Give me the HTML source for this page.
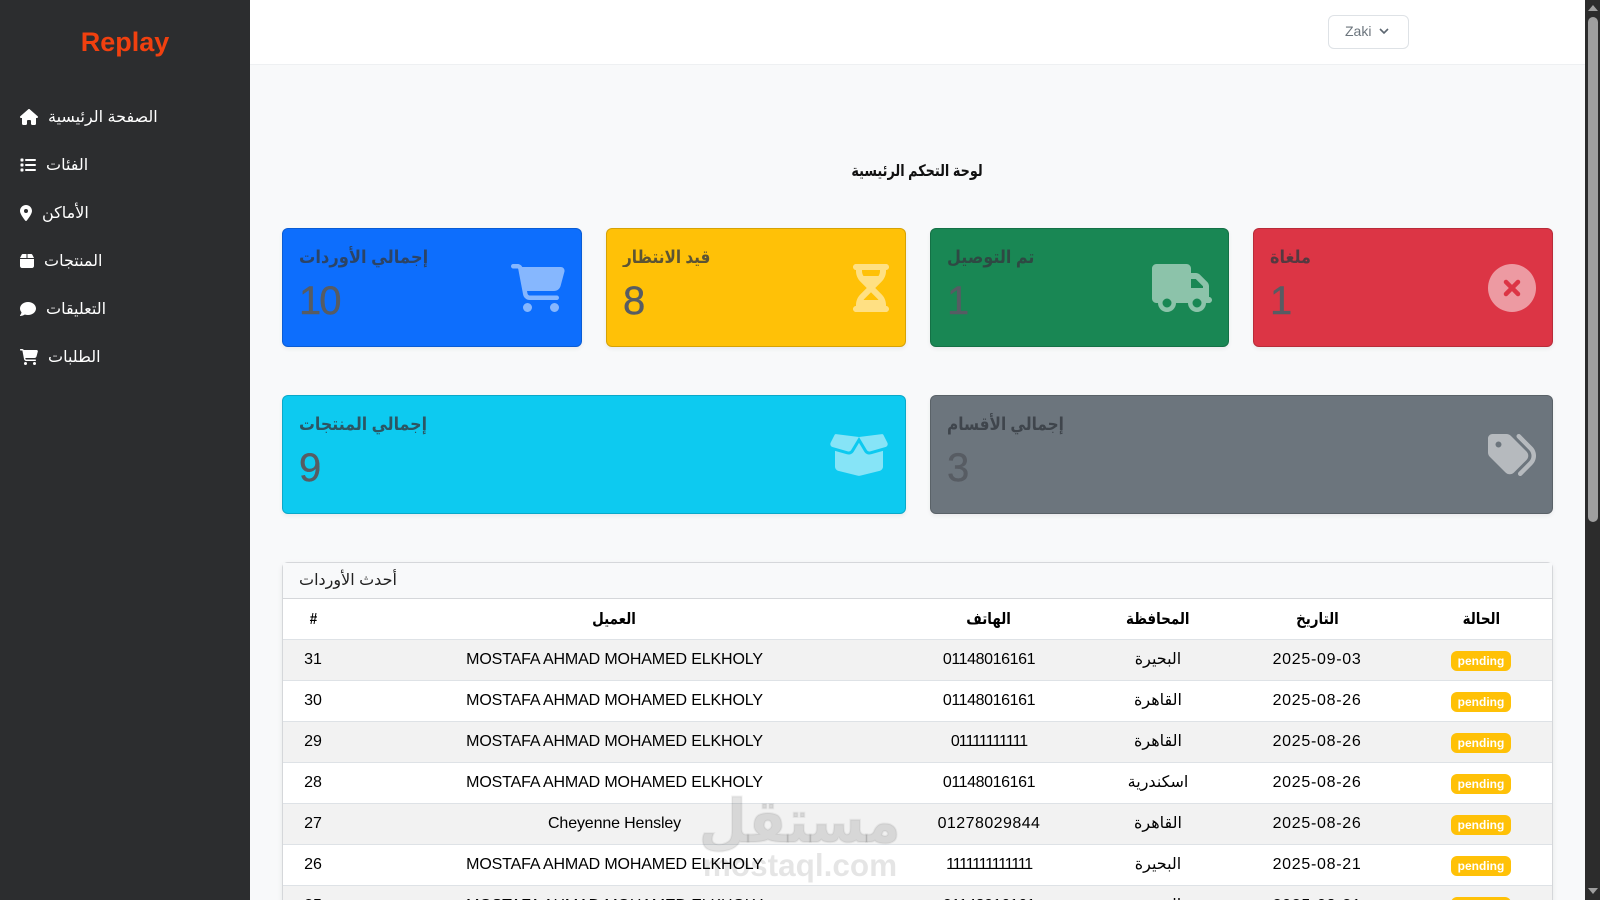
<!DOCTYPE html>
<html lang="ar">
<head>
<meta charset="utf-8">
<title>Replay</title>
<style>
*{box-sizing:border-box}
html,body{margin:0;padding:0;width:1600px;height:900px;overflow:hidden;background:#f8f9fa;font-family:"Liberation Sans","DejaVu Sans",sans-serif;color:#000}
#root{position:absolute;left:0;top:0;width:1600px;height:900px;overflow:hidden;background:#f8f9fa}
#side{position:absolute;left:0;top:0;width:250px;height:900px;background:#2c2d2f}
#logo{position:absolute;left:0;width:250px;top:24px;text-align:center;color:#f1400f;font-size:27px;font-weight:700;line-height:36px}
.nav{position:absolute;left:20px;height:24px;display:flex;align-items:center;color:#fff;font-size:16px}
.nav svg{fill:#fff;height:16px;flex:none}
.nav span{direction:rtl;margin-left:10px}
#top{position:absolute;left:250px;top:0;width:1335px;height:65px;background:#fff;border-bottom:1px solid #eef0f2}
#btn{position:absolute;left:1328px;top:15px;width:81px;height:34px;border:1px solid #dee2e6;border-radius:6px;background:#fff;color:#6c757d;font-size:14px;line-height:30px;padding-left:16px}
#btn svg{position:absolute;left:50px;top:11px}
#title{position:absolute;left:250px;width:1335px;top:160px;text-align:center;font-size:16px;font-weight:700;line-height:24px;color:#111}
#title span{display:inline-block;direction:rtl;transform:scaleX(.8)}
.card{position:absolute;height:119px;border:1px solid rgba(0,0,0,.16);border-radius:6px;box-shadow:0 2px 4px rgba(0,0,0,.06);overflow:hidden}
.card .t{position:absolute;left:16px;top:14px;font-size:18px;font-weight:700;line-height:28px;color:#343a40;opacity:.8;direction:rtl;transform-origin:left center;transform:scaleX(.89);white-space:nowrap}
.card .n{position:absolute;left:16px;top:48px;font-size:40px;line-height:48px;color:#575c63;-webkit-text-stroke:.4px #575c63}
.card svg{position:absolute;right:16px;top:35px;height:48px;fill:#fff;opacity:.5}
#panel{position:absolute;left:282px;top:562px;width:1271px;height:360px;background:#fff;border:1px solid #d5d7da;border-radius:6px 6px 0 0;box-shadow:0 2px 6px rgba(0,0,0,.07)}
#ph{height:36px;background:#f8f9fa;border-bottom:1px solid #d5d7da;font-size:16px;line-height:36px;padding-left:16px;color:#222}
#ph span{direction:rtl;display:inline-block}
table{border-collapse:collapse;table-layout:fixed;width:1269px;font-size:16px}
td,th{height:41px;padding:0;text-align:center;border-bottom:1px solid #dee2e6;vertical-align:middle;line-height:20px}
th{font-weight:700;height:40px}
th span{display:inline-block;direction:rtl;transform:scaleX(.84);position:relative;top:1px}
tbody tr:nth-child(odd){background:#f2f2f2}
tbody td:nth-child(2){letter-spacing:-.14px}
.ar{direction:rtl}
.d{letter-spacing:.7px}
.b{display:inline-block;width:60px;height:20px;border-radius:6px;background:#ffc107;color:#fff;font-size:12px;font-weight:700;line-height:20px;position:relative;top:1px}
#wm1{position:absolute;left:650px;width:300px;top:772px;text-align:center;font-size:60px;font-weight:700;line-height:100px;color:rgba(0,0,0,.11);-webkit-text-stroke:2px rgba(0,0,0,.05);z-index:5}
#wm1 span{display:inline-block;direction:rtl;transform:scaleX(.92)}
#wm2{position:absolute;left:650px;width:300px;top:845px;text-align:center;font-size:31.5px;font-weight:700;line-height:40px;color:rgba(0,0,0,.1);z-index:5}
#sb{position:absolute;left:1585px;top:0;width:15px;height:900px;background:#2c2c2c}
#sb i{position:absolute;left:3px;top:17px;width:10px;height:505px;background:#9f9f9f;border-radius:5px}
#sb b{position:absolute;left:3px;width:0;height:0;border-left:5px solid transparent;border-right:5px solid transparent}
</style>
</head>
<body>
<div id="root">
<div id="top"></div>
<div id="btn">Zaki<svg width="10" height="8" viewBox="0 0 10 8"><path d="M1 2l4 4 4-4" fill="none" stroke="#5c6670" stroke-width="1.6"/></svg></div>

<div id="side">
  <div id="logo">Replay</div>
  <div class="nav" style="top:105px"><svg viewBox="0 0 576 512"><path d="M575.8 255.5c0 18-15 32.1-32 32.1h-32l.7 160.2c0 2.7-.2 5.4-.5 8.1V472c0 22.1-17.9 40-40 40H456c-1.1 0-2.2 0-3.3-.1c-1.4 .1-2.8 .1-4.2 .1H416 392c-22.1 0-40-17.9-40-40V448 384c0-17.7-14.3-32-32-32H256c-17.7 0-32 14.3-32 32v64 24c0 22.1-17.9 40-40 40H160 128.1c-1.5 0-3-.1-4.5-.2c-1.2 .1-2.4 .2-3.6 .2H104c-22.1 0-40-17.9-40-40V360c0-.9 0-1.9 .1-2.8V287.6H32c-18 0-32-14-32-32.1c0-9 3-17 10-24L266.4 8c7-7 15-8 22-8s15 2 21 7L564.8 231.5c8 7 12 15 11 24z"/></svg><span>الصفحة الرئيسية</span></div>
  <div class="nav" style="top:153px"><svg viewBox="0 0 512 512"><path d="M40 48C26.7 48 16 58.7 16 72v48c0 13.3 10.7 24 24 24H88c13.3 0 24-10.7 24-24V72c0-13.3-10.7-24-24-24H40zM192 64c-17.7 0-32 14.3-32 32s14.3 32 32 32H480c17.7 0 32-14.3 32-32s-14.3-32-32-32H192zm0 160c-17.7 0-32 14.3-32 32s14.3 32 32 32H480c17.7 0 32-14.3 32-32s-14.3-32-32-32H192zm0 160c-17.7 0-32 14.3-32 32s14.3 32 32 32H480c17.7 0 32-14.3 32-32s-14.3-32-32-32H192zM16 232v48c0 13.3 10.7 24 24 24H88c13.3 0 24-10.7 24-24V232c0-13.3-10.7-24-24-24H40c-13.3 0-24 10.7-24 24zM40 368c-13.3 0-24 10.7-24 24v48c0 13.3 10.7 24 24 24H88c13.3 0 24-10.7 24-24V392c0-13.3-10.7-24-24-24H40z"/></svg><span>الفئات</span></div>
  <div class="nav" style="top:201px"><svg viewBox="0 0 384 512"><path d="M215.7 499.2C267 435 384 279.4 384 192C384 86 298 0 192 0S0 86 0 192c0 87.4 117 243 168.3 307.2c12.3 15.3 35.1 15.3 47.4 0zM192 256a64 64 0 1 1 0-128 64 64 0 1 1 0 128z"/></svg><span>الأماكن</span></div>
  <div class="nav" style="top:249px"><svg viewBox="0 0 448 512"><path d="M50.7 58.5L0 160H208V32H93.7C75.5 32 58.9 42.3 50.7 58.5zM240 160H448L397.3 58.5C389.1 42.3 372.5 32 354.3 32H240V160zm208 32H0V416c0 35.3 28.7 64 64 64H384c35.3 0 64-28.7 64-64V192z"/></svg><span>المنتجات</span></div>
  <div class="nav" style="top:297px"><svg viewBox="0 0 512 512"><path d="M512 240c0 114.9-114.6 208-256 208c-37.1 0-72.3-6.4-104.1-17.9c-11.9 8.7-31.3 20.6-54.3 30.6C73.6 471.1 44.7 480 16 480c-6.5 0-12.3-3.9-14.8-9.9c-2.5-6-1.1-12.8 3.4-17.4l0 0 0 0 0 0 0 0 .3-.3c.3-.3 .7-.7 1.3-1.4c1.1-1.2 2.8-3.1 4.9-5.7c4.1-5 9.6-12.4 15.2-21.6c10-16.6 19.5-38.4 21.4-62.9C17.7 326.8 0 285.1 0 240C0 125.1 114.6 32 256 32s256 93.1 256 208z"/></svg><span>التعليقات</span></div>
  <div class="nav" style="top:345px"><svg viewBox="0 0 576 512"><path d="M0 24C0 10.7 10.7 0 24 0H69.5c22 0 41.5 12.8 50.6 32h411c26.3 0 45.5 25 38.6 50.4l-41 152.3c-8.5 31.4-37 53.3-69.5 53.3H170.7l5.4 28.5c2.2 11.3 12.1 19.5 23.6 19.5H488c13.3 0 24 10.7 24 24s-10.7 24-24 24H199.7c-34.6 0-64.3-24.6-70.7-58.5L77.4 54.5c-.7-3.8-4-6.5-7.9-6.5H24C10.7 48 0 37.3 0 24zM128 464a48 48 0 1 1 96 0 48 48 0 1 1 -96 0zm336-48a48 48 0 1 1 0 96 48 48 0 1 1 0-96z"/></svg><span>الطلبات</span></div>
</div>

<div id="title"><span>لوحة التحكم الرئيسية</span></div>

<div class="card" style="left:282px;top:228px;width:300px;background:#0d6efd">
  <div class="t" style="transform:scaleX(.906)">إجمالي الأوردات</div><div class="n" style="letter-spacing:-2px">10</div>
  <svg viewBox="0 0 576 512"><path d="M0 24C0 10.7 10.7 0 24 0H69.5c22 0 41.5 12.8 50.6 32h411c26.3 0 45.5 25 38.6 50.4l-41 152.3c-8.5 31.4-37 53.3-69.5 53.3H170.7l5.4 28.5c2.2 11.3 12.1 19.5 23.6 19.5H488c13.3 0 24 10.7 24 24s-10.7 24-24 24H199.7c-34.6 0-64.3-24.6-70.7-58.5L77.4 54.5c-.7-3.8-4-6.5-7.9-6.5H24C10.7 48 0 37.3 0 24zM128 464a48 48 0 1 1 96 0 48 48 0 1 1 -96 0zm336-48a48 48 0 1 1 0 96 48 48 0 1 1 0-96z"/></svg>
</div>
<div class="card" style="left:606px;top:228px;width:300px;background:#ffc107">
  <div class="t" style="transform:scaleX(.85)">قيد الانتظار</div><div class="n">8</div>
  <svg viewBox="0 0 384 512"><path d="M32 0C14.3 0 0 14.3 0 32S14.3 64 32 64V75c0 42.4 16.9 83.1 46.9 113.1L146.7 256 78.9 323.9C48.9 353.9 32 394.6 32 437v11c-17.7 0-32 14.3-32 32s14.3 32 32 32H64 320h32c17.7 0 32-14.3 32-32s-14.3-32-32-32V437c0-42.4-16.9-83.1-46.9-113.1L237.3 256l67.9-67.9c30-30 46.9-70.7 46.9-113.1V64c17.7 0 32-14.3 32-32s-14.3-32-32-32H320 64 32zM96 75V64H288V75c0 19-5.6 37.4-16 53H112c-10.3-15.6-16-34-16-53zm16 309c3.5-5.3 7.6-10.3 12.1-14.9L192 301.3l67.9 67.9c4.6 4.6 8.6 9.6 12.1 14.9H112z"/></svg>
</div>
<div class="card" style="left:930px;top:228px;width:299px;background:#198754">
  <div class="t">تم التوصيل</div><div class="n">1</div>
  <svg viewBox="0 0 640 512"><path d="M48 0C21.5 0 0 21.5 0 48V368c0 26.5 21.5 48 48 48H64c0 53 43 96 96 96s96-43 96-96H384c0 53 43 96 96 96s96-43 96-96h32c17.7 0 32-14.3 32-32s-14.3-32-32-32V288 256 237.3c0-17-6.7-33.3-18.7-45.3L512 114.7c-12-12-28.3-18.7-45.3-18.7H416V48c0-26.5-21.5-48-48-48H48zM416 160h50.7L544 237.3V256H416V160zM112 416a48 48 0 1 1 96 0 48 48 0 1 1 -96 0zm368-48a48 48 0 1 1 0 96 48 48 0 1 1 0-96z"/></svg>
</div>
<div class="card" style="left:1253px;top:228px;width:300px;background:#dc3545">
  <div class="t">ملغاة</div><div class="n">1</div>
  <svg viewBox="0 0 512 512"><path d="M256 512A256 256 0 1 0 256 0a256 256 0 1 0 0 512zM175 175c9.4-9.4 24.6-9.4 33.9 0l47 47 47-47c9.4-9.4 24.6-9.4 33.9 0s9.4 24.6 0 33.9l-47 47 47 47c9.4 9.4 9.4 24.6 0 33.9s-24.6 9.4-33.9 0l-47-47-47 47c-9.4 9.4-24.6 9.4-33.9 0s-9.4-24.6 0-33.9l47-47-47-47c-9.4-9.4-9.4-24.6 0-33.9z"/></svg>
</div>
<div class="card" style="left:282px;top:395px;width:624px;background:#0dcaf0">
  <div class="t" style="transform:scaleX(.88)">إجمالي المنتجات</div><div class="n">9</div>
  <svg viewBox="0 0 640 512"><path d="M58.9 42.1c3-6.1 9.6-9.6 16.3-8.7L320 64 564.8 33.4c6.7-.8 13.3 2.7 16.3 8.7l41.7 83.4c9 17.9-.6 39.6-19.8 45.1L439.6 217.3c-13.9 4-28.8-1.9-36.2-14.3L320 64 236.6 203c-7.4 12.4-22.3 18.3-36.2 14.3L37.1 170.6c-19.3-5.5-28.8-27.2-19.8-45.1L58.9 42.1zM321.1 128l54.9 91.4c14.9 24.8 44.6 36.6 72.5 28.6L576 211.6v167c0 22-15 41.2-36.4 46.6l-204.1 51c-10.2 2.6-20.9 2.6-31 0l-204.1-51C79 419.7 64 400.5 64 378.5v-167L191.6 248c27.8 8 57.6-3.8 72.5-28.6L318.9 128h2.2z"/></svg>
</div>
<div class="card" style="left:930px;top:395px;width:623px;background:#6c757d">
  <div class="t" style="transform:scaleX(.85)">إجمالي الأقسام</div><div class="n">3</div>
  <svg viewBox="0 0 512 512"><path d="M345 39.1L472.8 168.4c52.4 53 52.4 138.2 0 191.2L360.8 472.9c-9.3 9.4-24.5 9.5-33.9 .2s-9.5-24.5-.2-33.9L438.6 325.9c33.9-34.3 33.9-89.4 0-123.7L310.9 72.9c-9.3-9.4-9.2-24.6 .2-33.9s24.6-9.2 33.9 .2zM0 229.5V80C0 53.5 21.5 32 48 32H197.5c17 0 33.3 6.7 45.3 18.7l168 168c25 25 25 65.5 0 90.5L277.3 442.7c-25 25-65.5 25-90.5 0l-168-168C6.7 262.7 0 246.5 0 229.5zM144 144a32 32 0 1 0 -64 0 32 32 0 1 0 64 0z"/></svg>
</div>

<div id="panel">
  <div id="ph"><span>أحدث الأوردات</span></div>
  <table>
    <colgroup><col style="width:60px"><col style="width:543px"><col style="width:206px"><col style="width:132px"><col style="width:186px"><col style="width:142px"></colgroup>
    <thead><tr><th><span>#</span></th><th><span>العميل</span></th><th><span>الهاتف</span></th><th><span>المحافظة</span></th><th><span>التاريخ</span></th><th><span>الحالة</span></th></tr></thead>
    <tbody>
      <tr><td>31</td><td>MOSTAFA AHMAD MOHAMED ELKHOLY</td><td style="letter-spacing:-.4px">01148016161</td><td class="ar">البحيرة</td><td class="d">2025-09-03</td><td><span class="b">pending</span></td></tr>
      <tr><td>30</td><td>MOSTAFA AHMAD MOHAMED ELKHOLY</td><td style="letter-spacing:-.4px">01148016161</td><td class="ar">القاهرة</td><td class="d">2025-08-26</td><td><span class="b">pending</span></td></tr>
      <tr><td>29</td><td>MOSTAFA AHMAD MOHAMED ELKHOLY</td><td style="letter-spacing:-1px">01111111111</td><td class="ar">القاهرة</td><td class="d">2025-08-26</td><td><span class="b">pending</span></td></tr>
      <tr><td>28</td><td>MOSTAFA AHMAD MOHAMED ELKHOLY</td><td style="letter-spacing:-.4px">01148016161</td><td class="ar">اسكندرية</td><td class="d">2025-08-26</td><td><span class="b">pending</span></td></tr>
      <tr><td>27</td><td>Cheyenne Hensley</td><td style="letter-spacing:.45px">01278029844</td><td class="ar">القاهرة</td><td class="d">2025-08-26</td><td><span class="b">pending</span></td></tr>
      <tr><td>26</td><td>MOSTAFA AHMAD MOHAMED ELKHOLY</td><td style="letter-spacing:-1.2px">1111111111111</td><td class="ar">البحيرة</td><td class="d">2025-08-21</td><td><span class="b">pending</span></td></tr>
      <tr><td>25</td><td>MOSTAFA AHMAD MOHAMED ELKHOLY</td><td style="letter-spacing:-.4px">01148016161</td><td class="ar">البحيرة</td><td class="d">2025-08-21</td><td><span class="b">pending</span></td></tr>
    </tbody>
  </table>
</div>

<div id="wm1"><span>مستقل</span></div>
<div id="wm2">mostaql.com</div>

<div id="sb"><b style="top:5px;border-bottom:6px solid #9f9f9f"></b><i></i><b style="top:888px;border-top:6px solid #9f9f9f"></b></div>
</div>
</body>
</html>
